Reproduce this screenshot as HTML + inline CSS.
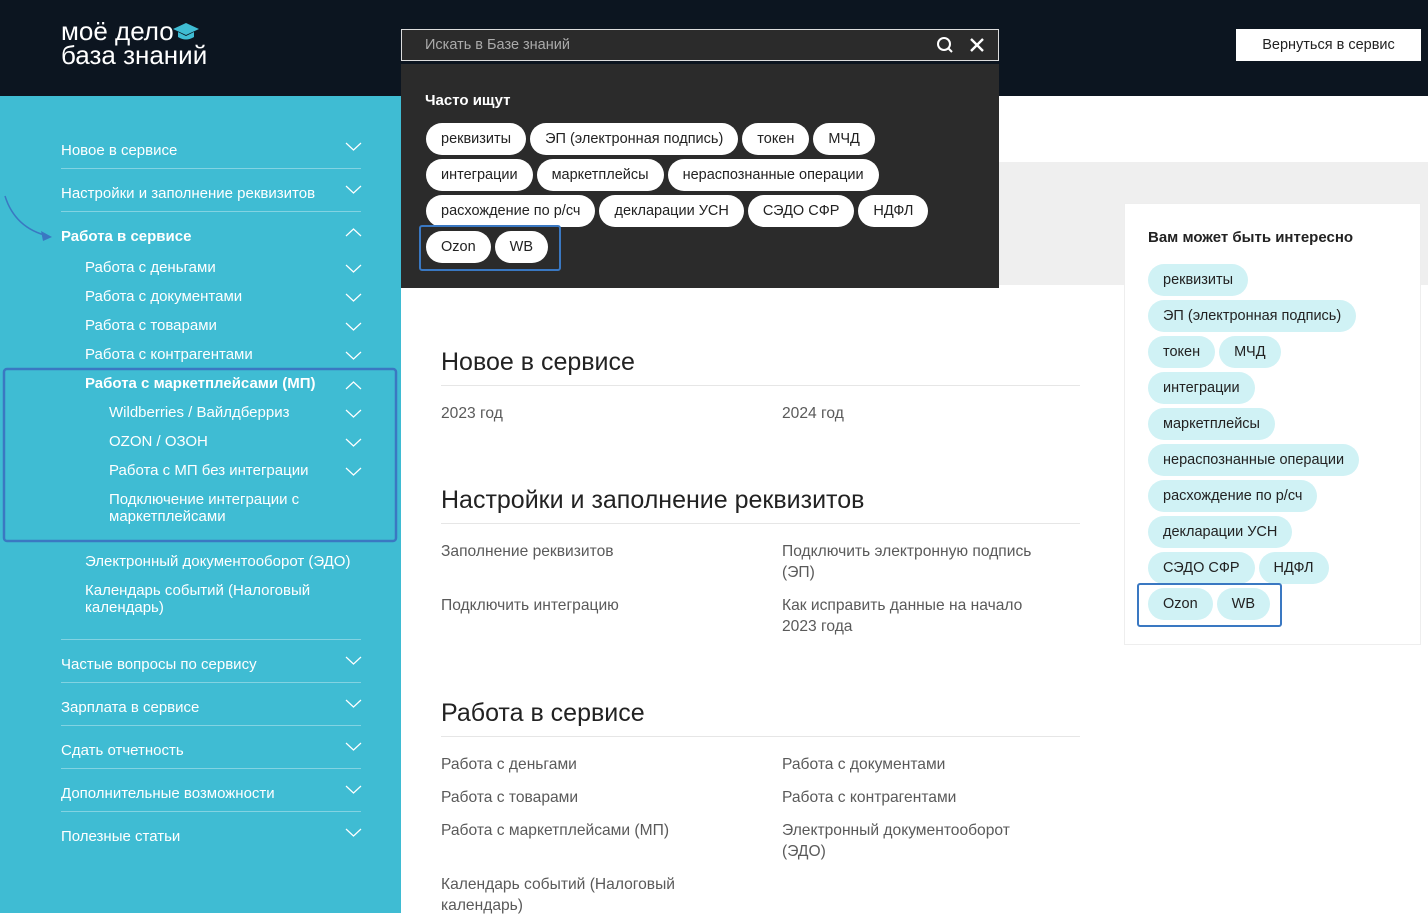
<!DOCTYPE html>
<html><head><meta charset="utf-8"><style>
*{margin:0;padding:0;box-sizing:border-box}
body{width:1428px;height:913px;overflow:hidden;position:relative;background:#fff;font-family:"Liberation Sans","Noto Sans CJK SC",sans-serif}
.a{position:absolute;white-space:nowrap}
.hdr{left:0;top:0;width:1428px;height:96px;background:#0c1520}
.side{left:0;top:96px;width:401px;height:817px;background:#3fbcd3}
.si{position:absolute;color:#fff;font-size:15px;white-space:nowrap}
.b{font-weight:bold}
.sep{position:absolute;left:61px;width:300px;height:1px;background:rgba(255,255,255,.35)}
.pill{display:inline-block;height:32px;line-height:32px;padding:0 15px;border-radius:16px;font-size:14.5px;color:#222;margin:0 4px 4px 0;vertical-align:top}
.dw .pill{background:#fff}
.rc .pill{background:#d0f2f5}
.h2{position:absolute;left:441px;font-size:25px;color:#222}
.hl{position:absolute;left:441px;width:639px;height:1px;background:#e6e6e6}
.lk{position:absolute;font-size:15.6px;color:#5a5a5a;line-height:21px}
</style></head><body>
<div class="a hdr"></div>
<div class="a" style="left:61px;top:19px;color:#fff;font-size:26px;line-height:24px">моё дело<br>база знаний</div>
<svg class="a" style="left:173px;top:22px" width="27" height="20" viewBox="0 0 27 20"><path d="M13 1 L26 7 L13 13 L0 7Z" fill="#3fbcd3"/><path d="M5 10 V15 Q13 20 21 15 V10 L13 14Z" fill="#3fbcd3"/></svg>
<div class="a" style="left:401px;top:29px;width:598px;height:32px;background:#2b2b2b;border:1px solid #ddd"></div>
<div class="a" style="left:425px;top:37px;font-size:14.5px;color:#aaa">Искать в Базе знаний</div>
<svg class="a" style="left:936px;top:36px" width="18" height="18" viewBox="0 0 18 18"><circle cx="8" cy="8" r="6" fill="none" stroke="#fff" stroke-width="2"/><path d="M12 12L16 16" stroke="#fff" stroke-width="2"/></svg>
<svg class="a" style="left:970px;top:38px" width="14" height="14" viewBox="0 0 14 14"><path d="M1 1L13 13M13 1L1 13" stroke="#fff" stroke-width="2.4"/></svg>
<div class="a" style="left:1236px;top:29px;width:185px;height:32px;background:#fff;color:#222;font-size:14.5px;line-height:32px;text-align:center">Вернуться в сервис</div>

<div class="a side"></div>
<div class="a" style="left:401px;top:162px;width:1027px;height:123px;background:#efefef"></div>

<div class="sep" style="top:168px"></div><div class="sep" style="top:211px"></div>
<div class="sep" style="top:639px"></div><div class="sep" style="top:682px"></div><div class="sep" style="top:725px"></div><div class="sep" style="top:768px"></div><div class="sep" style="top:811px"></div>
<div class="si" style="left:61px;top:142px">Новое в сервисе</div>
<div class="si" style="left:61px;top:185px">Настройки и заполнение реквизитов</div>
<div class="si b" style="left:61px;top:228px">Работа в сервисе</div>
<div class="si" style="left:85px;top:259px">Работа с деньгами</div>
<div class="si" style="left:85px;top:288px">Работа с документами</div>
<div class="si" style="left:85px;top:317px">Работа с товарами</div>
<div class="si" style="left:85px;top:346px">Работа с контрагентами</div>
<div class="si b" style="left:85px;top:375px">Работа с маркетплейсами (МП)</div>
<div class="si" style="left:109px;top:404px">Wildberries / Вайлдберриз</div>
<div class="si" style="left:109px;top:433px">OZON / ОЗОН</div>
<div class="si" style="left:109px;top:462px">Работа с МП без интеграции</div>
<div class="si" style="left:109px;top:491px;line-height:17px">Подключение интеграции с<br>маркетплейсами</div>
<div class="si" style="left:85px;top:553px">Электронный документооборот (ЭДО)</div>
<div class="si" style="left:85px;top:582px;line-height:17px">Календарь событий (Налоговый<br>календарь)</div>
<div class="si" style="left:61px;top:656px">Частые вопросы по сервису</div>
<div class="si" style="left:61px;top:699px">Зарплата в сервисе</div>
<div class="si" style="left:61px;top:742px">Сдать отчетность</div>
<div class="si" style="left:61px;top:785px">Дополнительные возможности</div>
<div class="si" style="left:61px;top:828px">Полезные статьи</div>
<svg class="a" style="left:0;top:0" width="400" height="913">
<g fill="none" stroke="#fff" stroke-width="1.2">
<path d="M346 143l7.5 7 7.5-7M346 186l7.5 7 7.5-7M346 236l7.5-7 7.5 7M346 265l7.5 7 7.5-7M346 294l7.5 7 7.5-7M346 323l7.5 7 7.5-7M346 352l7.5 7 7.5-7M346 389l7.5-7 7.5 7M346 410l7.5 7 7.5-7M346 439l7.5 7 7.5-7M346 468l7.5 7 7.5-7M346 657l7.5 7 7.5-7M346 700l7.5 7 7.5-7M346 743l7.5 7 7.5-7M346 786l7.5 7 7.5-7M346 829l7.5 7 7.5-7"/>
</g>
<path d="M5 196 Q15 228 48 236" fill="none" stroke="#3a78c2" stroke-width="1.5"/><path d="M52 237l-11 -6 2 10z" fill="#3a78c2"/>
<rect x="4" y="369" width="392" height="172" rx="3" fill="none" stroke="#3a78c2" stroke-width="2.5"/>
</svg>

<div class="a dw" style="left:401px;top:64px;width:598px;height:224px;background:#2b2b2b"></div>
<div class="a" style="left:425px;top:92px;color:#fff;font-size:15px;font-weight:bold">Часто ищут</div>
<div class="a dw" style="left:426px;top:123px;width:560px;white-space:normal">
<span class="pill">реквизиты</span><span class="pill">ЭП (электронная подпись)</span><span class="pill">токен</span><span class="pill">МЧД</span><br>
<span class="pill">интеграции</span><span class="pill">маркетплейсы</span><span class="pill">нераспознанные операции</span><br>
<span class="pill">расхождение по р/сч</span><span class="pill">декларации УСН</span><span class="pill">СЭДО СФР</span><span class="pill">НДФЛ</span><br>
<span class="pill">Ozon</span><span class="pill">WB</span></div>
<div class="a" style="left:419px;top:225px;width:142px;height:46px;border:2.5px solid #3a78c2;border-radius:3px"></div>

<div class="h2" style="top:348px">Новое в сервисе</div><div class="hl" style="top:385px"></div>
<div class="lk" style="left:441px;top:403px">2023 год</div><div class="lk" style="left:782px;top:403px">2024 год</div>
<div class="h2" style="top:486px">Настройки и заполнение реквизитов</div><div class="hl" style="top:523px"></div>
<div class="lk" style="left:441px;top:541px">Заполнение реквизитов</div>
<div class="lk" style="left:782px;top:541px">Подключить электронную подпись<br>(ЭП)</div>
<div class="lk" style="left:441px;top:595px">Подключить интеграцию</div>
<div class="lk" style="left:782px;top:595px">Как исправить данные на начало<br>2023 года</div>
<div class="h2" style="top:699px">Работа в сервисе</div><div class="hl" style="top:736px"></div>
<div class="lk" style="left:441px;top:754px">Работа с деньгами</div><div class="lk" style="left:782px;top:754px">Работа с документами</div>
<div class="lk" style="left:441px;top:787px">Работа с товарами</div><div class="lk" style="left:782px;top:787px">Работа с контрагентами</div>
<div class="lk" style="left:441px;top:820px">Работа с маркетплейсами (МП)</div><div class="lk" style="left:782px;top:820px">Электронный документооборот<br>(ЭДО)</div>
<div class="lk" style="left:441px;top:874px">Календарь событий (Налоговый<br>календарь)</div>

<div class="a" style="left:1124px;top:203px;width:297px;height:442px;background:#fff;border:1px solid #eee"></div>
<div class="a" style="left:1148px;top:229px;font-size:15px;font-weight:bold;color:#222">Вам может быть интересно</div>
<div class="a rc" style="left:1148px;top:264px;width:260px;white-space:normal">
<span class="pill">реквизиты</span><br><span class="pill">ЭП (электронная подпись)</span><br><span class="pill">токен</span><span class="pill">МЧД</span><br><span class="pill">интеграции</span><br><span class="pill">маркетплейсы</span><br><span class="pill">нераспознанные операции</span><br><span class="pill">расхождение по р/сч</span><br><span class="pill">декларации УСН</span><br><span class="pill">СЭДО СФР</span><span class="pill">НДФЛ</span><br><span class="pill">Ozon</span><span class="pill">WB</span></div>
<div class="a" style="left:1137px;top:583px;width:145px;height:44px;border:2.5px solid #3a78c2;border-radius:3px"></div>
</body></html>
